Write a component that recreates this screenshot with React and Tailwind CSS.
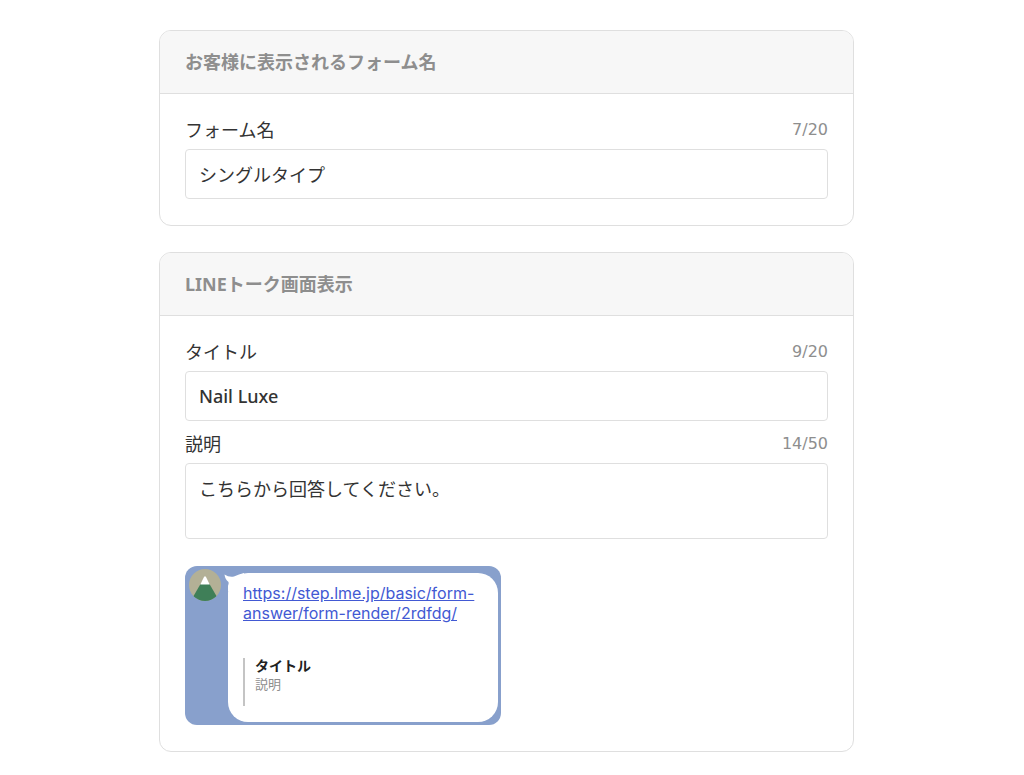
import { useState } from 'react'

function Card({ title, children }) {
    return (
        <section className="rounded-xl border border-[#dfdfdf] bg-white overflow-hidden">
            <h2 className="h-[63px] px-[25px] flex items-center border-b border-[#dfdfdf] bg-[#f7f7f7] text-[18px] font-bold text-[#8e8e8e]">
                {title}
            </h2>
            <div className="px-[25px] pt-[21px] pb-[26px]">{children}</div>
        </section>
    )
}

function FieldLabel({ id, label, count, max }) {
    return (
        <div className="h-[34px] pb-1 flex items-center justify-between">
            <label htmlFor={id} className="text-[18px] leading-[30px] text-[#333333]">{label}</label>
            <span className='font-["DejaVu_Sans",sans-serif] text-[16px] leading-[28px] text-[#8e8e8e]'>
                {count}/{max}
            </span>
        </div>
    )
}

// Snow-capped mountain avatar
function Avatar() {
    return (
        <svg viewBox="0 0 32 32" className="w-8 h-8 shrink-0" aria-hidden="true">
            <defs>
                <clipPath id="avatar-clip">
                    <circle cx="16" cy="16" r="16" />
                </clipPath>
            </defs>
            <g clipPath="url(#avatar-clip)">
                <rect width="32" height="32" fill="#b3b096" />
                <path d="M11.5 15h9L28 28v5H4v-5z" fill="#3f7f58" />
                <path d="M15 8q1-1.400 2 0l3.700 7.500h-9.400z" fill="#ffffff" />
            </g>
        </svg>
    )
}

function TalkPreview() {
    return (
        <div className="w-[316px] max-w-full rounded-xl bg-[#88a0cc] pl-1 pr-[3px] pt-[7px] pb-[3px] flex gap-[7px] items-start">
            <div className="-mt-1">
                <Avatar />
            </div>
            <div className="relative flex-1 h-[149px] rounded-[20px] bg-white px-[15px] pt-[10px]">
                {/* Speech bubble tail */}
                <svg viewBox="0 0 20 18" className="absolute -left-1 top-0 w-5 h-[18px]" aria-hidden="true">
                    <path d="M0.500 1.500Q5 4.500 10 3.500Q15 1 20 0V18H4V13Q5 10 4.500 9Q1 6 0.500 1.500z" fill="#ffffff" />
                </svg>
                <a
                    href="https://step.lme.jp/basic/form-answer/form-render/2rdfdg/"
                    className='relative block font-["Inter",sans-serif] text-[16px] leading-[20px] text-[#4259d3] underline'
                >
                    https://step.lme.jp/basic/form-answer/form-render/2rdfdg/
                </a>
                <div className="mt-[35px] h-12 border-l-2 border-[#c4c4c4] pl-[10px]">
                    <p className="text-[14px] leading-[16px] font-bold text-[#222222]">タイトル</p>
                    <p className="text-[13px] leading-[20px] text-[#8e8e8e]">説明</p>
                </div>
            </div>
        </div>
    )
}

export default function App() {
    const [formName, setFormName] = useState('シングルタイプ')
    const [title, setTitle] = useState('Nail Luxe')
    const [description, setDescription] = useState('こちらから回答してください。')

    return (
        <main className='min-h-screen bg-white pl-[159px] pr-[170px] pt-[30px] pb-6 flex flex-col gap-[26px] font-["Noto_Sans","Noto_Sans_CJK_JP",sans-serif]'>
            <Card title="お客様に表示されるフォーム名">
                <FieldLabel id="form-name" label="フォーム名" count={formName.length} max={20} />
                <input
                    id="form-name"
                    type="text"
                    value={formName}
                    onChange={(e) => setFormName(e.target.value)}
                    className="block w-full h-[50px] px-[13px] rounded border border-[#dfdfdf] bg-white text-[18px] text-[#333333]"
                />
            </Card>

            <Card title="LINEトーク画面表示">
                <FieldLabel id="talk-title" label="タイトル" count={title.length} max={20} />
                <input
                    id="talk-title"
                    type="text"
                    value={title}
                    onChange={(e) => setTitle(e.target.value)}
                    className="block w-full h-[50px] px-[13px] rounded border border-[#dfdfdf] bg-white text-[18px] font-medium text-[#333333]"
                />
                <div className="mt-2">
                    <FieldLabel id="talk-description" label="説明" count={description.length} max={50} />
                </div>
                <textarea
                    id="talk-description"
                    value={description}
                    onChange={(e) => setDescription(e.target.value)}
                    className="block w-full h-[76px] px-[13px] py-[11px] rounded border border-[#dfdfdf] bg-white text-[18px] leading-[28px] text-[#333333] resize-none"
                />
                <div className="mt-[27px]">
                    <TalkPreview />
                </div>
            </Card>
        </main>
    )
}
